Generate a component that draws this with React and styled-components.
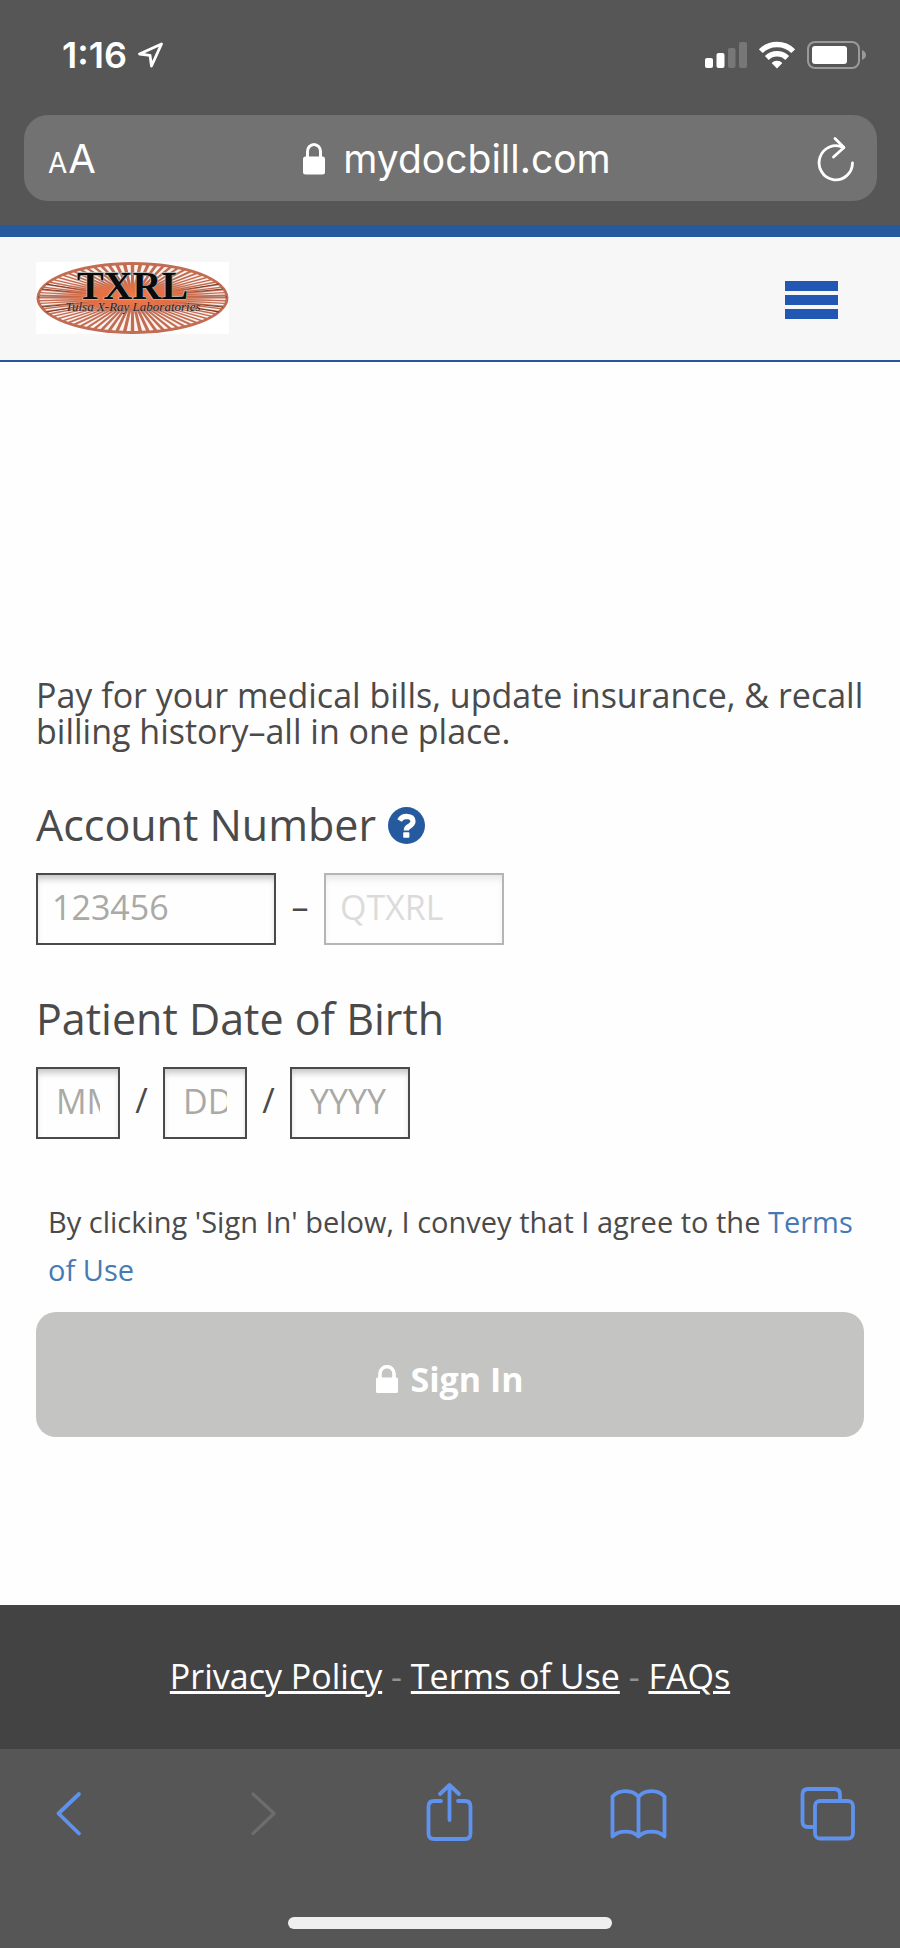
import React from "react";
import styled, { createGlobalStyle } from "styled-components";

const GlobalStyle = createGlobalStyle`
  * { box-sizing: border-box; }
  body { margin: 0; background: #fefefe; }
  button { border: 0; padding: 0; background: none; font: inherit; color: inherit; cursor: pointer; }
`;

const Page = styled.div`
  min-height: 100vh;
  display: flex;
  flex-direction: column;
  font-family: "Open Sans", "Noto Sans", sans-serif;
  color: #4a4a4a;
`;

const BrowserTop = styled.div`
  background: #565656;
  color: #fff;
  font-family: Inter, "Liberation Sans", sans-serif;
  padding: 32px 23px 24px 24px;
`;

const StatusBar = styled.div`
  display: flex;
  align-items: center;
  justify-content: space-between;
  height: 46px;
  margin-bottom: 37px;
  padding: 0 10px 0 38px;
`;

const StatusGroup = styled.div`
  display: flex;
  align-items: center;
  gap: ${(p) => p.$gap}px;
`;

const Clock = styled.span`
  font-size: 36px;
  line-height: 46px;
  font-weight: 600;
`;

const AddressBar = styled.div`
  display: grid;
  grid-template-columns: 60px 1fr 60px;
  align-items: center;
  height: 86px;
  padding: 2px 11px 0 24px;
  border-radius: 24px;
  background: #727272;
`;

const TextSize = styled.button`
  display: flex;
  align-items: baseline;
  gap: 1px;
  line-height: 48px;
  padding-top: 4px;
`;

const Letter = styled.span`
  font-size: ${(p) => p.$size}px;
`;

const Address = styled.div`
  display: flex;
  align-items: center;
  justify-content: center;
  gap: 18px;
  font-size: 39px;
  line-height: 48px;
`;

const ReloadButton = styled.button`
  display: flex;
  justify-content: center;
`;

const Header = styled.header`
  display: flex;
  align-items: center;
  justify-content: space-between;
  height: 137px;
  padding: 0 62px 2px 36px;
  border-top: 12px solid #255a9f;
  border-bottom: 2px solid #2a5699;
  background: #f7f7f7;
`;

const LogoLink = styled.a`
  display: flex;
  background: #fff;
`;

const MenuButton = styled.button`
  display: flex;
  flex-direction: column;
  gap: 4px;
  width: 53px;
  margin-top: 4px;
`;

const MenuBar = styled.span`
  height: 10px;
  background: #2257b3;
`;

const Main = styled.main`
  flex: 1;
  padding: 315px 36px 167px;
`;

const Intro = styled.p`
  margin: 0 0 46px;
  font-size: 34px;
  line-height: 36px;
`;

const Field = styled.fieldset`
  min-width: 0;
  margin: 0 0 ${(p) => p.$after}px;
  padding: 0;
  border: 0;
`;

const FieldTitle = styled.legend`
  display: flex;
  align-items: center;
  gap: 12px;
  padding: 0 0 18px;
  font-size: 43px;
  line-height: 60px;
`;

const HelpButton = styled.button`
  display: flex;
`;

const InputRow = styled.div`
  display: flex;
  align-items: center;
`;

const TextInput = styled.input`
  width: ${(p) => p.$width}px;
  height: 72px;
  padding: 0 ${(p) => p.$pad}px 4px;
  border: 2px solid #4a4a4a;
  border-radius: 0;
  background: #fefefe;
  box-shadow: inset 0 6px 6px -2px rgba(60, 50, 70, 0.28);
  font-family: inherit;
  font-size: 34px;
  color: #4a4a4a;
  opacity: ${(p) => (p.disabled ? 0.4 : 1)};

  &::placeholder { color: #a9a9a6; opacity: 1; }
`;

const Separator = styled.span`
  width: ${(p) => p.$width}px;
  text-align: center;
  font-size: 34px;
  line-height: 46px;
  padding-bottom: 6px;
`;

const Agreement = styled.p`
  margin: 0 0 18px;
  padding-left: 12px;
  font-size: 29px;
  line-height: 48px;
`;

const TextLink = styled.a`
  color: #467ab5;
  text-decoration: none;
`;

const SignInButton = styled.button`
  display: flex;
  align-items: center;
  justify-content: center;
  gap: 12px;
  width: 100%;
  height: 125px;
  padding-top: 8px;
  border-radius: 20px;
  background: #c4c4c2;
  color: #fff;
  font-size: 34px;
  font-weight: 700;
`;

const Footer = styled.footer`
  padding: 48px 24px 50px;
  background: #434343;
  color: #929292;
  font-size: 34px;
  line-height: 46px;
  text-align: center;
`;

const FooterLink = styled.a`
  color: #fff;
`;

const BrowserBottom = styled.div`
  display: flex;
  flex-direction: column;
  align-items: center;
  gap: 72px;
  padding: 31px 0 19px;
  background: #565656;
`;

const Toolbar = styled.nav`
  display: flex;
  align-self: stretch;
  justify-content: space-between;
  padding: 0 42px 0 39px;
  color: #5f92ee;
`;

const ToolButton = styled.button`
  display: flex;
  width: 60px;
  height: 65px;
  &:disabled { color: #6d6d6d; }
`;

const HomeIndicator = styled.div`
  width: 36%;
  height: 12px;
  border-radius: 6px;
  background: #efefef;
`;

const LocationArrow = () => (
  <svg width="26" height="26" viewBox="0 0 26 26" fill="none" stroke="currentColor" strokeWidth="2.8" strokeLinejoin="round">
    <path d="M24.500 2 L2.500 12 L13 13.300 L14.500 24 Z" />
  </svg>
);

const SignalIcon = () => (
  <svg width="42" height="28" viewBox="0 0 42 28" fill="#fff">
    <rect x="0" y="17" width="8" height="10" rx="2" />
    <rect x="11.5" y="12" width="8" height="15" rx="2" />
    <rect x="23" y="7" width="7.5" height="20" rx="2" fill="#777" />
    <rect x="34" y="1" width="8" height="26" rx="2" fill="#777" />
  </svg>
);

const WifiIcon = () => (
  <svg width="36" height="28" viewBox="0 0 36 28" fill="none" stroke="#fff" strokeWidth="5.4">
    <path d="M1.8 10.2 A23 23 0 0 1 34.2 10.2" />
    <path d="M7.8 17 A14.5 14.5 0 0 1 28.2 17" />
    <path d="M18 27.5 L12.6 21.9 A7.6 7.6 0 0 1 23.4 21.9 Z" fill="#fff" stroke="none" />
  </svg>
);

const BatteryIcon = () => (
  <svg width="60" height="28" viewBox="0 0 60 28">
    <rect x="1" y="1" width="51" height="26" rx="7" fill="none" stroke="#9a9a9a" strokeWidth="2" />
    <rect x="5" y="5" width="35" height="18" rx="3" fill="#fff" />
    <path d="M55 9 Q59 11 59 14 Q59 17 55 19 Z" fill="#9a9a9a" />
  </svg>
);

const AddressLock = () => (
  <svg width="22" height="32" viewBox="0 0 22 32">
    <path d="M4.5 16 V8.5 A6.5 7 0 0 1 17.5 8.5 V16" fill="none" stroke="#fff" strokeWidth="3" />
    <rect x="0" y="13.5" width="22" height="18" rx="2.5" fill="#fff" />
  </svg>
);

const ReloadIcon = () => (
  <svg width="38" height="46" viewBox="0 0 38 46" fill="none" stroke="#fff" strokeWidth="2.8" strokeLinecap="round" strokeLinejoin="round">
    <path d="M35.5 27 A16.7 17 0 1 1 26.5 11.7" />
    <path d="M18 2.5 L27 11.5 L16.5 21" />
  </svg>
);

const HelpIcon = () => (
  <svg width="37" height="37" viewBox="0 0 37 37">
    <circle cx="18.5" cy="18.5" r="18.5" fill="#255a9f" />
    <path d="M11.5 13.5 Q14 9.3 18.5 9.3 Q25 9.6 25 14.3 Q25 17 21.5 19.2 Q18.3 20.8 18.3 23.5" fill="none" stroke="#fff" strokeWidth="5.2" />
    <rect x="15.2" y="25.2" width="6.2" height="5.6" rx="0.8" fill="#fff" />
  </svg>
);

const ButtonLock = () => (
  <svg width="22" height="28" viewBox="0 0 22 28">
    <path d="M4 14 V8.5 A7 6.8 0 0 1 18 8.5 V14" fill="none" stroke="#fff" strokeWidth="3.6" />
    <rect x="0" y="12.5" width="22" height="15.5" rx="1.5" fill="#fff" />
  </svg>
);

const lineIcon = {
  width: 60,
  height: 65,
  viewBox: "0 0 60 65",
  fill: "none",
  stroke: "currentColor",
  strokeWidth: 3.8,
  strokeLinecap: "round",
  strokeLinejoin: "round",
};

const BackIcon = () => (
  <svg {...lineIcon} strokeWidth="3.8"><path d="M40 14 L19.500 33.500 L40 53.500" /></svg>
);
const ForwardIcon = () => (
  <svg {...lineIcon} strokeWidth="3.2"><path d="M24 14 L45 33.500 L24 53.500" /></svg>
);
const ShareIcon = () => (
  <svg {...lineIcon}>
    <path d="M22 21 H15 Q9.500 21 9.500 26.500 V53.500 Q9.500 59 15 59 H46 Q51.500 59 51.500 53.500 V26.500 Q51.500 21 46 21 H39" />
    <path d="M30.500 40 V5 M21 14 L30.500 5 L40 14" />
  </svg>
);
const BookIcon = () => (
  <svg {...lineIcon}>
    <path d="M30.500 17 C25 9.500 11 9 4.500 16.500 V56.500 C11 50 24 50 30.500 56.500 C37 50 50 50 56.500 56.500 V16.500 C50 9 36 9.500 30.500 17 V56.500" />
  </svg>
);
const TabsIcon = () => (
  <svg {...lineIcon}>
    <path d="M16 47 H10 Q4.500 47 4.500 41.500 V14.500 Q4.500 9 10 9 H36.500 Q42 9 42 14.500 V20" />
    <rect x="17" y="21" width="38" height="37.500" rx="5" />
  </svg>
);

const RAY_COUNT = 76;
const rays = Array.from({ length: RAY_COUNT }, (_, i) => {
  const a = ((i + 0.5) / RAY_COUNT) * Math.PI * 2;
  const w = 0.022;
  const pt = (t, k) => `${(96.5 + 93 * k * Math.cos(t)).toFixed(1)},${(36 + 33 * k * Math.sin(t)).toFixed(1)}`;
  return `${pt(a, 0.35)} ${pt(a - w, 1)} ${pt(a + w, 1)}`;
});

const Logo = () => (
  <svg width="193" height="72" viewBox="0 0 193 72" role="img" aria-label="TXRL Tulsa X-Ray Laboratories">
    <defs>
      <radialGradient id="glow">
        <stop offset="0" stopColor="#f57a48" />
        <stop offset="0.6" stopColor="#e56f45" stopOpacity="0.9" />
        <stop offset="1" stopColor="#c0694f" stopOpacity="0" />
      </radialGradient>
    </defs>
    <ellipse cx="96.500" cy="36" rx="96" ry="36" fill="#c26d53" />
    {rays.map((points, i) => (
      <polygon key={i} points={points} fill="#fff3ee" />
    ))}
    <path
      d="M2 35 H191 M6 27 L96 36 L6 45 M187 27 L96 36 L187 45 M10 22 L96 36 L10 50 M183 22 L96 36 L183 50"
      fill="none"
      stroke="#6d2d20"
      strokeWidth="0.900"
    />
    <ellipse cx="96.500" cy="35" rx="84" ry="18" fill="url(#glow)" />
    <text x="96.500" y="37" textAnchor="middle" fontFamily="Liberation Serif, serif" fontWeight="700" fontSize="40" fill="#0b0b0b" stroke="#aebbb8" strokeWidth="1.400" paintOrder="stroke">TXRL</text>
    <text x="97" y="49" textAnchor="middle" fontFamily="Liberation Serif, serif" fontStyle="italic" fontSize="13" fill="#30201d" stroke="#b9a59c" strokeWidth="0.600" paintOrder="stroke">Tulsa X-Ray Laboratories</text>
  </svg>
);

export default function App() {
  return (
    <Page>
      <GlobalStyle />
      <BrowserTop>
        <StatusBar>
          <StatusGroup $gap={10}>
            <Clock>1:16</Clock>
            <LocationArrow />
          </StatusGroup>
          <StatusGroup $gap={12}>
            <SignalIcon />
            <WifiIcon />
            <BatteryIcon />
          </StatusGroup>
        </StatusBar>
        <AddressBar>
          <TextSize type="button" aria-label="Text size">
            <Letter $size={28}>A</Letter>
            <Letter $size={40}>A</Letter>
          </TextSize>
          <Address>
            <AddressLock />
            <span>mydocbill.com</span>
          </Address>
          <ReloadButton type="button" aria-label="Reload"><ReloadIcon /></ReloadButton>
        </AddressBar>
      </BrowserTop>

      <Header>
        <LogoLink href="#home"><Logo /></LogoLink>
        <MenuButton type="button" aria-label="Menu">
          <MenuBar /><MenuBar /><MenuBar />
        </MenuButton>
      </Header>

      <Main>
        <Intro>Pay for your medical bills, update insurance, &amp; recall billing history–all in one place.</Intro>
        <form onSubmit={(e) => e.preventDefault()}>
          <Field $after={44}>
            <FieldTitle>
              <label htmlFor="account">Account Number</label>
              <HelpButton type="button" aria-label="Help"><HelpIcon /></HelpButton>
            </FieldTitle>
            <InputRow>
              <TextInput id="account" $width={240} $pad={14} placeholder="123456" />
              <Separator $width={48}>–</Separator>
              <TextInput $width={180} $pad={14} placeholder="QTXRL" aria-label="Account code" disabled />
            </InputRow>
          </Field>
          <Field $after={59}>
            <FieldTitle>Patient Date of Birth</FieldTitle>
            <InputRow>
              <TextInput $width={84} $pad={18} placeholder="MM" aria-label="Month" />
              <Separator $width={43}>/</Separator>
              <TextInput $width={84} $pad={18} placeholder="DD" aria-label="Day" />
              <Separator $width={43}>/</Separator>
              <TextInput $width={120} $pad={18} placeholder="YYYY" aria-label="Year" />
            </InputRow>
          </Field>
          <Agreement>
            By clicking 'Sign In' below, I convey that I agree to the <TextLink href="#terms">Terms of Use</TextLink>
          </Agreement>
          <SignInButton type="submit"><ButtonLock />Sign In</SignInButton>
        </form>
      </Main>

      <Footer>
        <FooterLink href="#privacy">Privacy Policy</FooterLink> - <FooterLink href="#terms">Terms of Use</FooterLink> - <FooterLink href="#faqs">FAQs</FooterLink>
      </Footer>

      <BrowserBottom>
        <Toolbar aria-label="Browser">
          <ToolButton type="button" aria-label="Back"><BackIcon /></ToolButton>
          <ToolButton type="button" aria-label="Forward" disabled><ForwardIcon /></ToolButton>
          <ToolButton type="button" aria-label="Share"><ShareIcon /></ToolButton>
          <ToolButton type="button" aria-label="Bookmarks"><BookIcon /></ToolButton>
          <ToolButton type="button" aria-label="Tabs"><TabsIcon /></ToolButton>
        </Toolbar>
        <HomeIndicator />
      </BrowserBottom>
    </Page>
  );
}
